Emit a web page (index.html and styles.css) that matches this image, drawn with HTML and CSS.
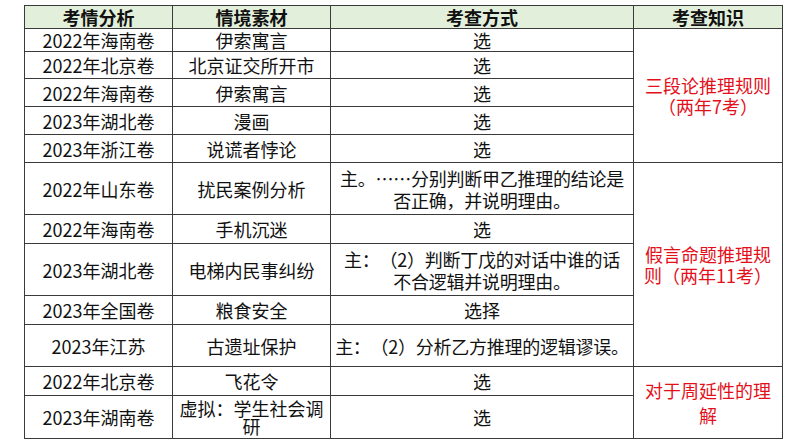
FILE: index.html
```html
<!DOCTYPE html>
<html lang="zh-CN">
<head>
<meta charset="utf-8">
<title>考情分析</title>
<link rel="stylesheet" href="styles.css">
</head>
<body>
<div class="page">
<table class="grid">
  <colgroup>
    <col class="c1"><col class="c2"><col class="c3"><col class="c4">
  </colgroup>
  <thead>
    <tr class="h-head">
      <th>考情分析</th><th>情境素材</th><th>考查方式</th><th>考查知识</th>
    </tr>
  </thead>
  <tbody>
    <tr class="h22"><td>2022年海南卷</td><td>伊索寓言</td><td>选</td>
      <td rowspan="5" class="know">三段论推理规则<br>（两年7考）</td></tr>
    <tr class="h27"><td>2022年北京卷</td><td>北京证交所开市</td><td>选</td></tr>
    <tr class="h28"><td>2022年海南卷</td><td>伊索寓言</td><td>选</td></tr>
    <tr class="h28"><td>2023年湖北卷</td><td>漫画</td><td>选</td></tr>
    <tr class="h28"><td>2023年浙江卷</td><td>说谎者悖论</td><td>选</td></tr>
    <tr class="h52"><td>2022年山东卷</td><td>扰民案例分析</td><td class="wide">主。……分别判断甲乙推理的结论是<br>否正确，并说明理由。</td>
      <td rowspan="5" class="know">假言命题推理规则（两年11考）</td></tr>
    <tr class="h29"><td>2022年海南卷</td><td>手机沉迷</td><td>选</td></tr>
    <tr class="h52"><td>2023年湖北卷</td><td>电梯内民事纠纷</td><td class="wide">主：（2）判断丁戊的对话中谁的话<br>不合逻辑并说明理由。</td></tr>
    <tr class="h29"><td>2023年全国卷</td><td>粮食安全</td><td>选择</td></tr>
    <tr class="h42"><td>2023年江苏</td><td>古遗址保护</td><td class="wide">主：（2）分析乙方推理的逻辑谬误。</td></tr>
    <tr class="h29"><td>2022年北京卷</td><td>飞花令</td><td>选</td>
      <td rowspan="2" class="know loose">对于周延性的理解</td></tr>
    <tr class="h43"><td>2023年湖南卷</td><td class="tight">虚拟：学生社会调研</td><td>选</td></tr>
  </tbody>
</table>
</div>
</body>
</html>
```

FILE: styles.css
```css
html, body {
  margin: 0;
  padding: 0;
  background: #ffffff;
}

.page {
  padding: 5px 12px 0 24px;
}

.grid {
  border-collapse: collapse;
  table-layout: fixed;
  width: 758px;
  font-family: "Noto Sans CJK SC", "Noto Sans", sans-serif;
  font-size: 18px;
  color: #111111;
  text-spacing-trim: space-all;
}

.c1 { width: 148px; }
.c2 { width: 158px; }
.c3 { width: 303px; }
.c4 { width: 149px; }

.grid th,
.grid td {
  border: 1px solid #3a3a3a;
  padding: 0 6px;
  text-align: center;
  vertical-align: middle;
  line-height: 22px;
  overflow: hidden;
}

.grid th {
  background: #e2efda;
  font-weight: 700;
  line-height: 20px;
}

.grid td.wide {
  padding: 0 2px;
  white-space: nowrap;
  letter-spacing: -0.25px;
}

.grid td.know {
  color: #e3101b;
  line-height: 21px;
}

.grid td.know.loose {
  line-height: 25px;
}

.grid td.tight {
  line-height: 18px;
}

.h-head { height: 23px; }
.h22 { height: 22px; }
.h27 { height: 27px; }
.h28 { height: 28px; }
.h29 { height: 29px; }
.h42 { height: 42px; }
.h43 { height: 43px; }
.h52 { height: 52px; }
```
